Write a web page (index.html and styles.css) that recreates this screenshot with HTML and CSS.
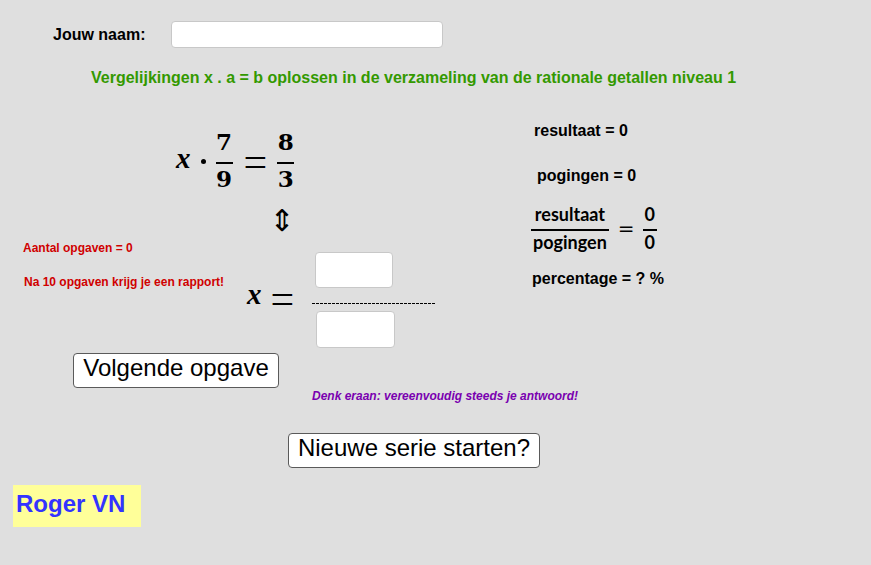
FILE: index.html
```html
<!DOCTYPE html>
<html lang="nl">
<head>
<meta charset="utf-8">
<title>Vergelijkingen x . a = b</title>
<link rel="stylesheet" href="styles.css">
</head>
<body>
<div class="canvas">
  <div class="obj name-label">Jouw naam:</div>
  <input class="obj name-input" type="text" aria-label="Jouw naam">
  <div class="obj title">Vergelijkingen x . a = b oplossen in de verzameling van de rationale getallen niveau 1</div>

  <div class="obj eq1">
    <span class="mi">x</span>
    <span class="cdot"></span>
    <span class="frac f1"><span class="num">7</span><span class="bar"></span><span class="den">9</span></span>
    <span class="meq">=</span>
    <span class="frac f2"><span class="num">8</span><span class="bar"></span><span class="den">3</span></span>
  </div>

  <div class="obj equiv">&#8661;</div>

  <div class="obj eq2">
    <span class="mi">x</span>
    <span class="meq">=</span>
  </div>
  <input class="obj ans ans-num" type="text" aria-label="teller">
  <div class="obj dashline"></div>
  <input class="obj ans ans-den" type="text" aria-label="noemer">

  <div class="obj red count">Aantal opgaven = 0</div>
  <div class="obj red note">Na 10 opgaven krijg je een rapport!</div>

  <button class="obj btn next" type="button">Volgende opgave</button>
  <div class="obj hint">Denk eraan: vereenvoudig steeds je antwoord!</div>
  <button class="obj btn restart" type="button">Nieuwe serie starten?</button>

  <div class="obj author">Roger VN</div>

  <div class="obj stat res">resultaat = 0</div>
  <div class="obj stat pog">pogingen = 0</div>
  <div class="obj rfrac">
    <span class="sfrac"><span class="snum">resultaat</span><span class="sbar"></span><span class="sden">pogingen</span></span>
    <span class="seq">=</span>
    <span class="sfrac"><span class="snum">0</span><span class="sbar"></span><span class="sden">0</span></span>
  </div>
  <div class="obj stat pct">percentage = ? %</div>
</div>
</body>
</html>
```

FILE: styles.css
```css
html, body {
  margin: 0;
  padding: 0;
  background: #dfdfdf;
}

.canvas {
  position: relative;
  width: 871px;
  height: 565px;
  overflow: hidden;
  background: #dfdfdf;
  font-family: "Liberation Sans", Arial, sans-serif;
  color: #000;
}

.obj {
  position: absolute;
  line-height: 1;
  white-space: nowrap;
}

/* header */
.name-label {
  left: 53px;
  top: 27px;
  font-size: 16px;
  font-weight: bold;
}

.name-input {
  left: 171px;
  top: 21px;
  width: 272px;
  height: 27px;
}

.name-input,
.ans {
  box-sizing: border-box;
  margin: 0;
  padding: 0 6px;
  border: 1px solid #c8c8c8;
  border-radius: 4px;
  background: #fff;
  outline: none;
}

.title {
  left: 91px;
  top: 70px;
  font-size: 16px;
  font-weight: bold;
  color: #339900;
}

/* math */
.eq1 {
  left: 176px;
  top: 129px;
  display: flex;
  align-items: flex-start;
}

.mi {
  font-family: "Liberation Serif", "Times New Roman", serif;
  font-style: italic;
  font-weight: bold;
  font-size: 29px;
  line-height: 28px;
  margin-top: 15px;
}

.cdot {
  width: 5px;
  height: 5px;
  border-radius: 50%;
  background: #000;
  margin-top: 30px;
  margin-left: 10px;
}

.frac {
  display: flex;
  flex-direction: column;
  align-items: center;
  width: 17px;
  font-family: "DejaVu Serif", "Liberation Serif", serif;
  font-weight: bold;
  font-size: 23px;
}

.f1 { margin-left: 10px; }
.f2 { margin-left: 10px; }

.frac .num,
.frac .den {
  line-height: 25px;
}

.frac .bar {
  align-self: stretch;
  height: 1.5px;
  background: #000;
  margin: 8px 0 2px;
}

.meq {
  font-family: "Liberation Serif", "Times New Roman", serif;
  font-size: 42px;
  line-height: 42px;
  margin-top: 12px;
  margin-left: 11px;
}

.equiv {
  left: 262px;
  top: 204px;
  width: 40px;
  text-align: center;
  font-family: "DejaVu Sans", sans-serif;
  font-size: 30px;
  line-height: 34px;
}

.eq2 {
  left: 247px;
  top: 265px;
  display: flex;
  align-items: flex-start;
}

.eq2 .meq {
  margin-left: 9px;
  margin-top: 13px;
}

.ans-num {
  left: 315px;
  top: 252px;
  width: 78px;
  height: 36px;
}

.ans-den {
  left: 316px;
  top: 311px;
  width: 79px;
  height: 37px;
}

.dashline {
  left: 312px;
  top: 303px;
  width: 124px;
  height: 1px;
  background: repeating-linear-gradient(to right, #000 0 3px, transparent 3px 4px);
}

/* red notes */
.red {
  font-size: 12px;
  font-weight: bold;
  color: #d00000;
}

.count { left: 23px; top: 242px; }
.note { left: 24px; top: 276px; }

/* buttons */
.btn {
  box-sizing: border-box;
  margin: 0;
  padding: 0 0 5px;
  height: 35px;
  border: 1px solid #5a5a5a;
  border-radius: 4px;
  background: #fff;
  font-family: "Liberation Sans", Arial, sans-serif;
  font-size: 24px;
  line-height: 28px;
  color: #000;
  text-align: center;
}

.next {
  left: 73px;
  top: 353px;
  width: 206px;
}

.restart {
  left: 288px;
  top: 433px;
  width: 252px;
}

.hint {
  left: 312px;
  top: 390px;
  font-size: 12px;
  font-weight: bold;
  font-style: italic;
  color: #7a00b0;
}

.author {
  left: 13px;
  top: 485px;
  width: 128px;
  height: 42px;
  box-sizing: border-box;
  padding: 7px 0 0 3px;
  background: #ffff99;
  font-size: 24px;
  font-weight: bold;
  color: #3333ff;
}

/* statistics */
.stat {
  font-size: 16px;
  font-weight: bold;
}

.res { left: 534px; top: 123px; }
.pog { left: 537px; top: 168px; }
.pct { left: 532px; top: 271px; }

.rfrac {
  left: 531px;
  top: 205px;
  display: flex;
  align-items: center;
  font-family: Lato, "DejaVu Sans", sans-serif;
  font-weight: bold;
  font-size: 18px;
}

.sfrac {
  display: flex;
  flex-direction: column;
  align-items: center;
}

.snum,
.sden {
  line-height: 18px;
  padding: 0 2px;
}

.sbar {
  align-self: stretch;
  height: 1.5px;
  background: #000;
  margin: 6px 0 2px;
}

.seq {
  font-family: "DejaVu Sans", sans-serif;
  font-weight: normal;
  font-size: 20px;
  line-height: 20px;
  margin: 0 8px 0 9px;
}
```
